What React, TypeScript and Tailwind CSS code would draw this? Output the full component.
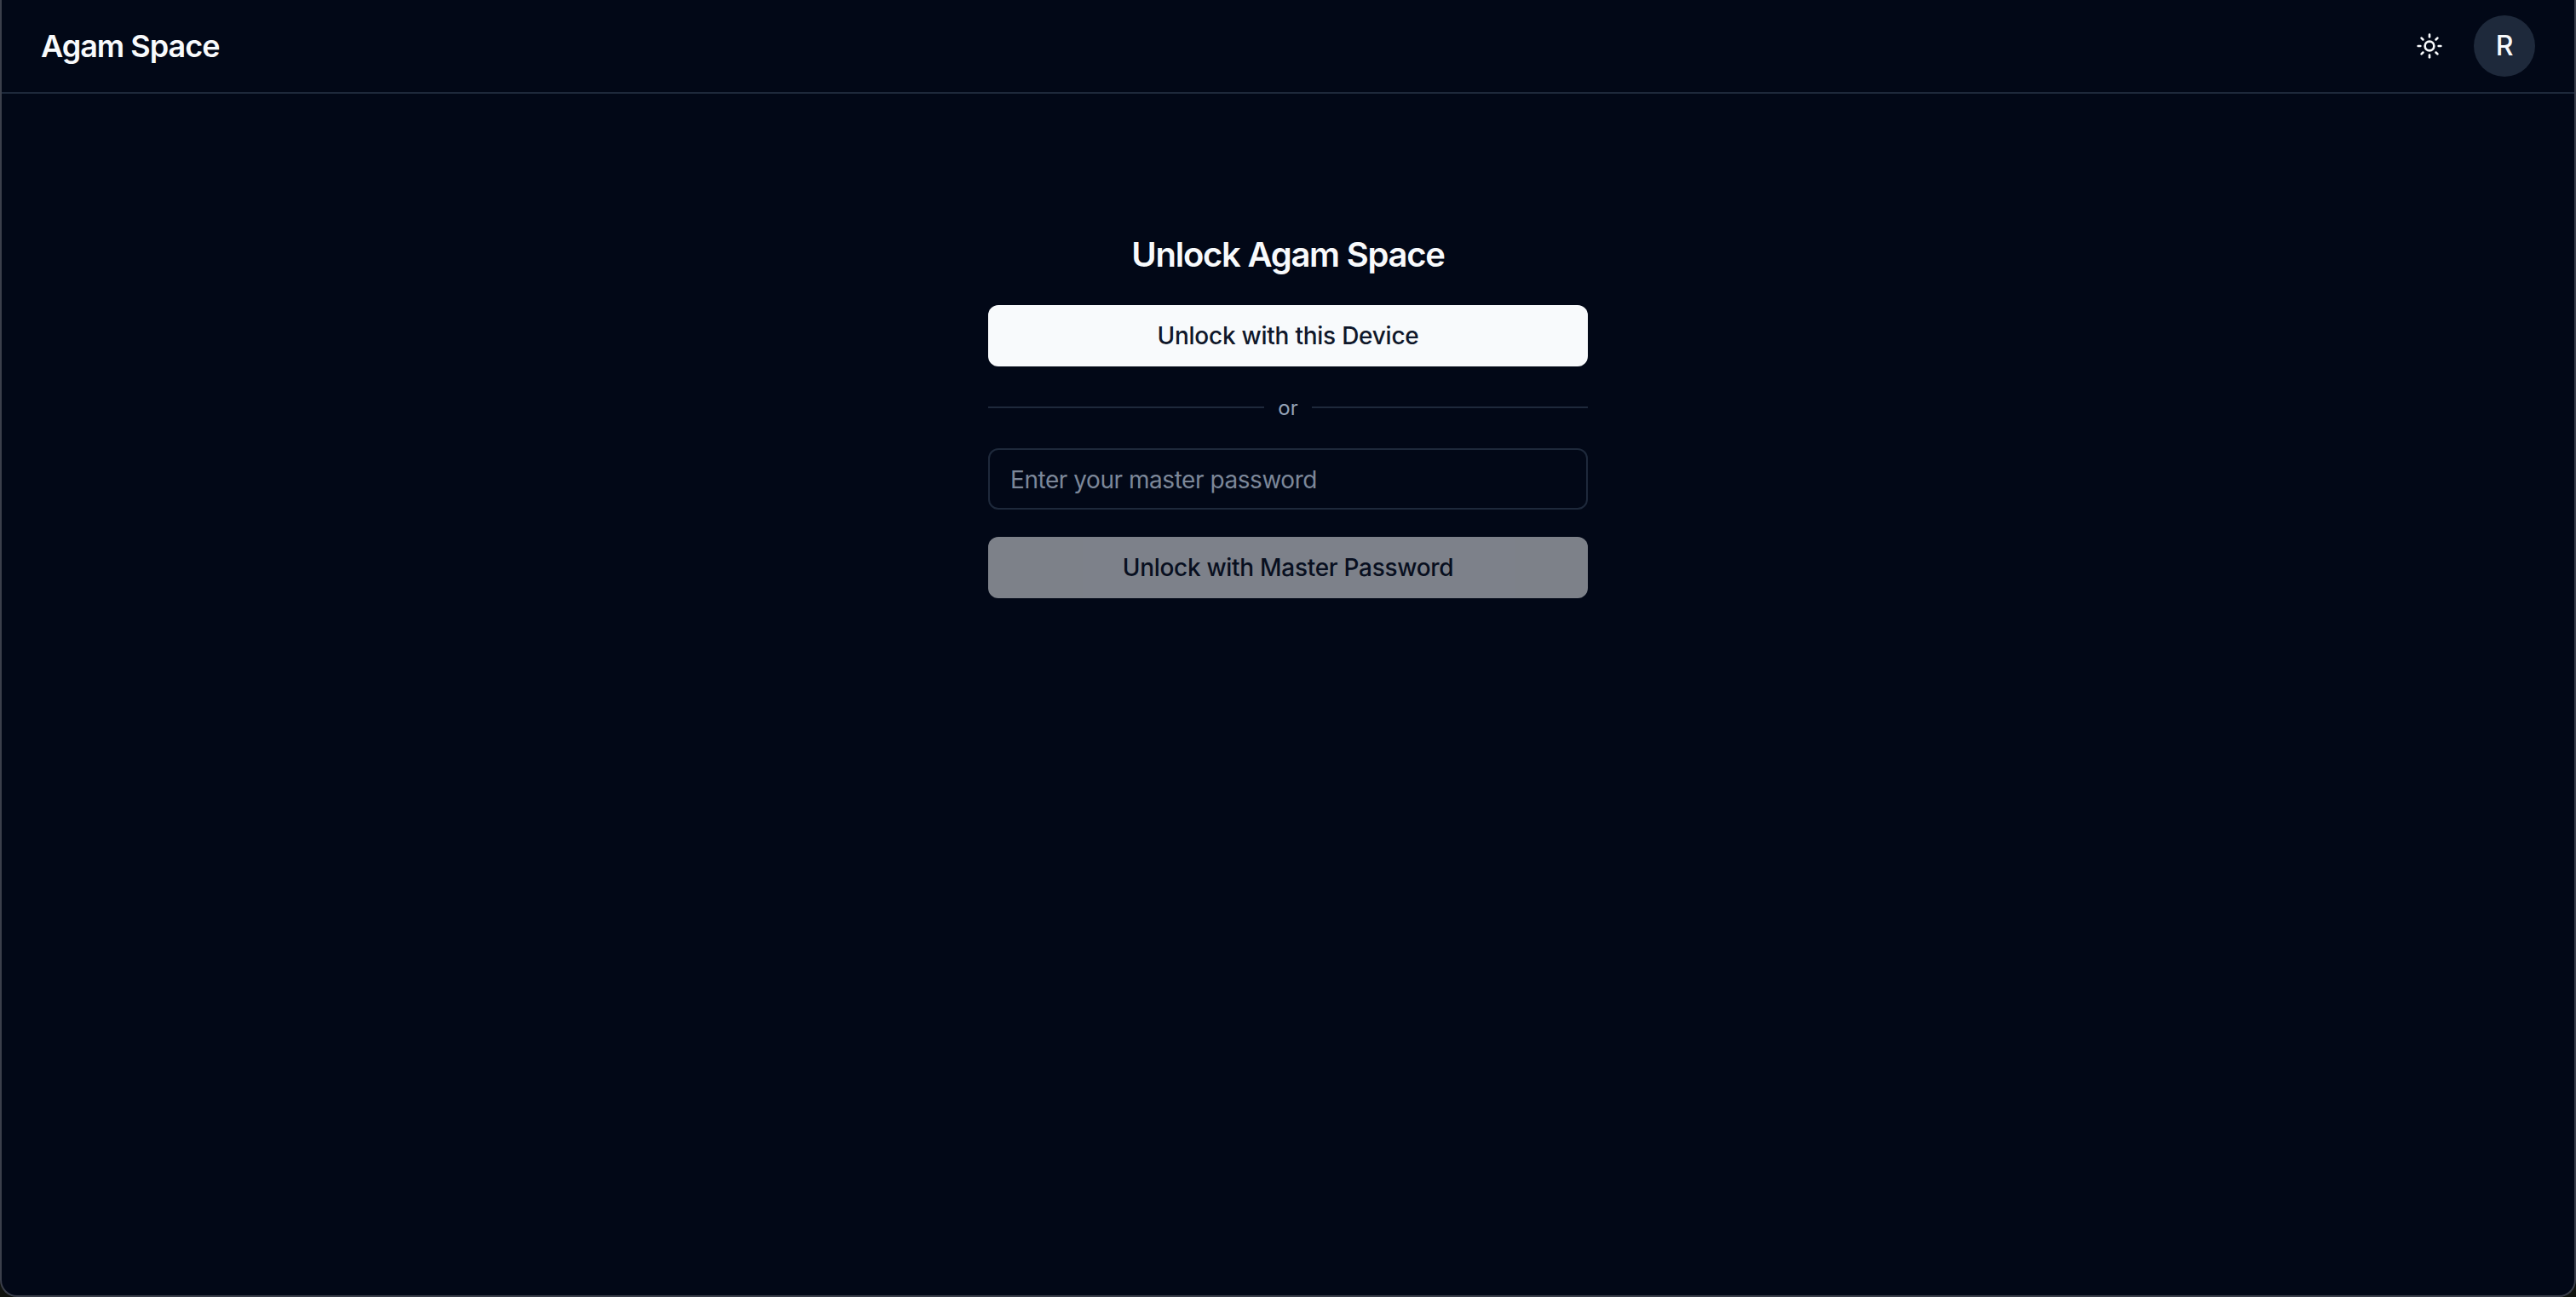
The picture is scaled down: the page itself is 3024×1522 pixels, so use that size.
import React from "react";
import { Sun } from "lucide-react";

const App = () => {
  return (
    <div className="h-[1522px] w-full bg-[#10130f] font-['Inter',sans-serif]">
      <div className="flex h-full flex-col overflow-hidden rounded-b-[20px] border-x-2 border-b-2 border-[#3b3f4b] bg-[#020817]">
        <header className="flex h-[110px] shrink-0 items-center justify-between border-b-2 border-[#1e293b] px-[46px]">
          <span className="text-[36px] font-semibold leading-none tracking-[-1px] text-[#f8fafc]">Agam Space</span>
          <div className="flex items-center gap-[36px]">
            <Sun className="h-8 w-8 text-[#f8fafc]" />
            <div className="flex h-[72px] w-[72px] items-center justify-center rounded-full bg-[#1e293b] text-[32px] font-medium text-[#f8fafc]">
              R
            </div>
          </div>
        </header>
        <main className="flex flex-1 justify-center pt-[164px]">
          <div className="flex w-[704px] flex-col">
            <h1 className="h-[48px] pt-[1px] text-center text-[40px] font-semibold leading-[48px] tracking-[-1.25px] text-[#f8fafc]">
              Unlock Agam Space
            </h1>
            <button className="mt-[36px] h-[72px] rounded-[12px] bg-[#f8fafc] text-[28px] font-medium tracking-[-0.25px] text-[#0f172a]">
              Unlock with this Device
            </button>
            <div className="mt-[36px] flex h-[24px] items-center gap-[16px]">
              <div className="h-[2px] flex-1 bg-[#1e293b]" />
              <span className="pt-[1px] text-[24px] leading-[24px] text-[#94a3b8]">or</span>
              <div className="h-[2px] flex-1 bg-[#1e293b]" />
            </div>
            <input
              type="password"
              placeholder="Enter your master password"
              className="mt-[36px] h-[72px] rounded-[12px] border-2 border-[#1e293b] bg-transparent px-[24px] pt-[2px] text-[28px] tracking-[-0.45px] text-[#f8fafc] placeholder:text-[#7c8799] outline-none"
            />
            <button
              disabled
              className="mt-[32px] h-[72px] rounded-[12px] bg-[#f8fafc] text-[28px] font-medium tracking-[-0.3px] text-[#0f172a] opacity-50"
            >
              Unlock with Master Password
            </button>
          </div>
        </main>
      </div>
    </div>
  );
};

export default App;
